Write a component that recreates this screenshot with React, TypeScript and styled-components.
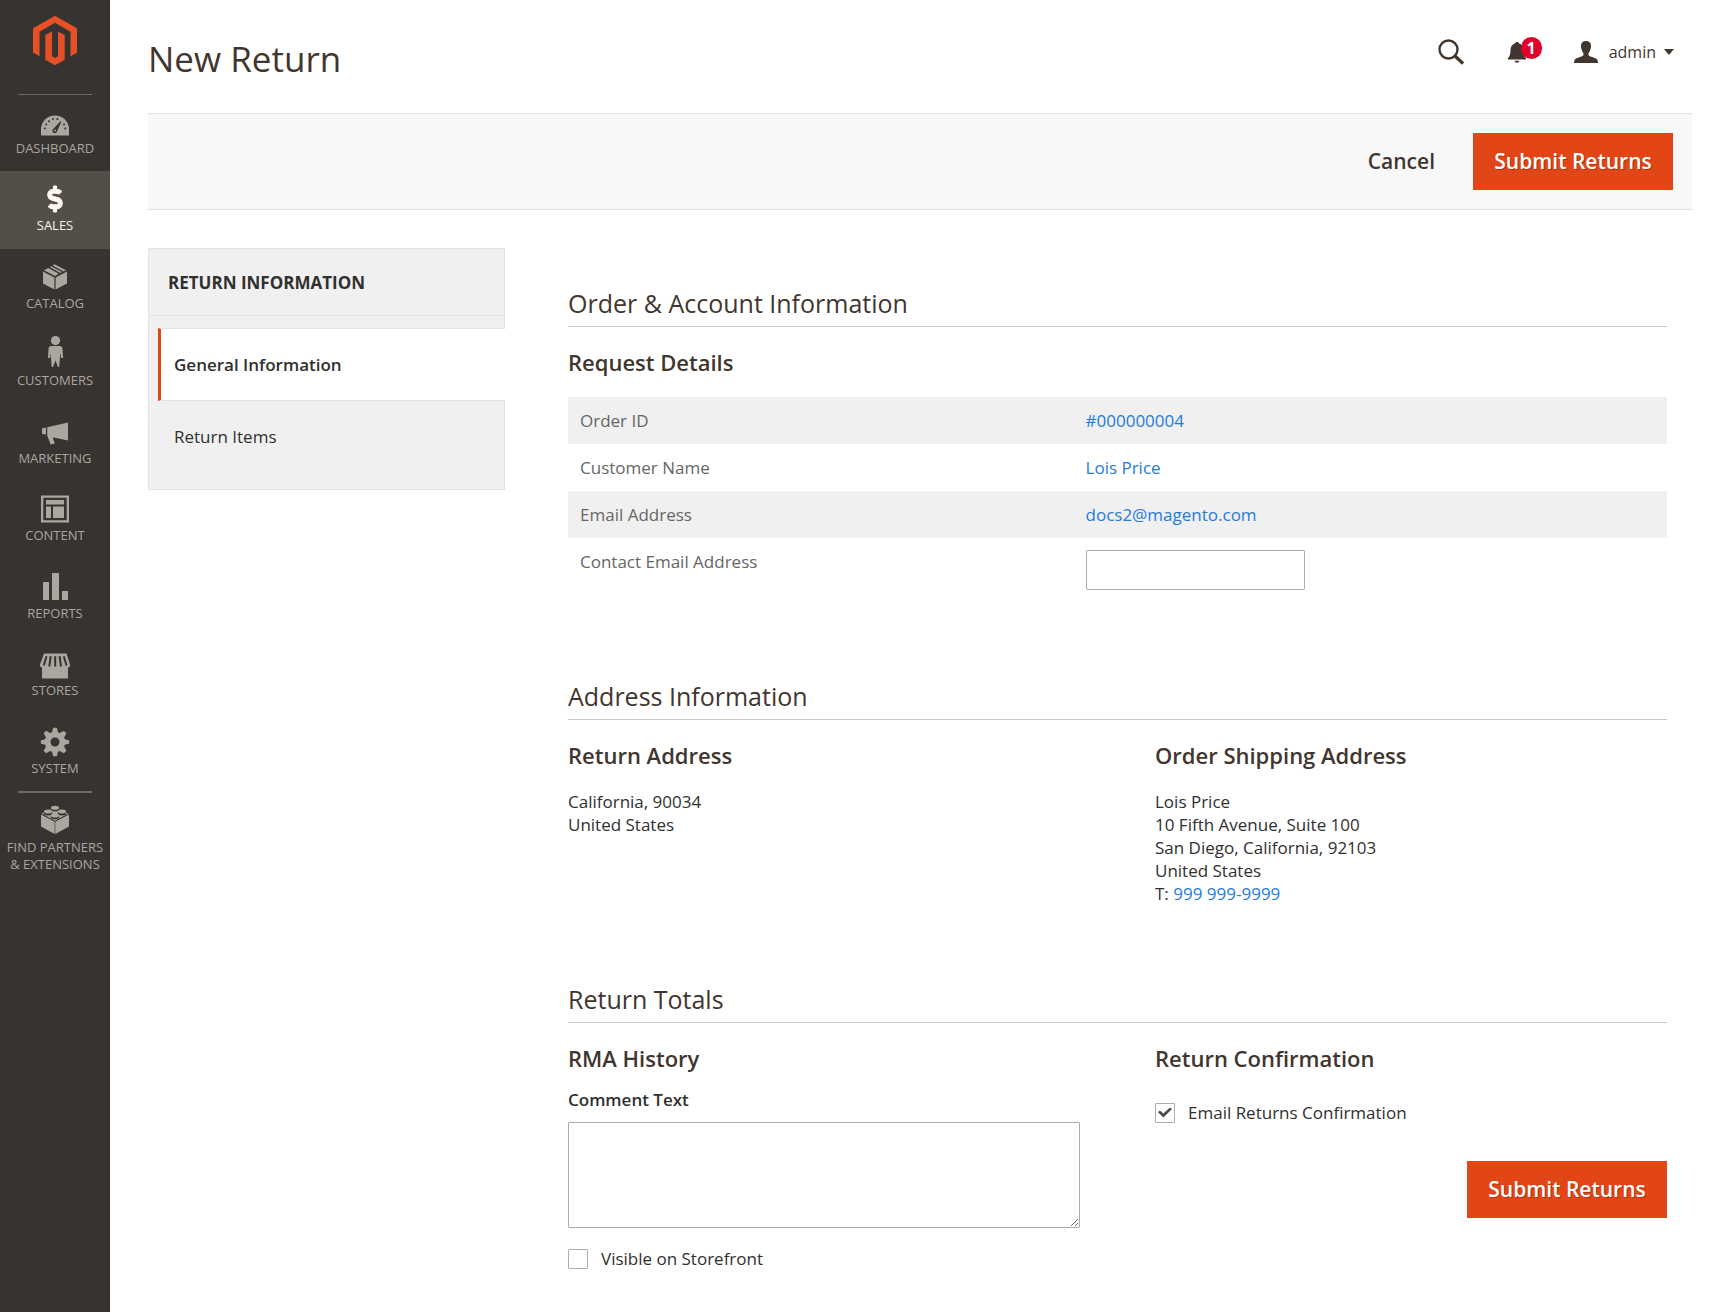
import React from "react";
import styled, { createGlobalStyle } from "styled-components";
import { FaDollarSign } from "react-icons/fa";

const colors = {
  sidebar: "#373330",
  sidebarActive: "#524e48",
  sidebarText: "#aaa6a0",
  sidebarRule: "#736963",
  brand: "#e24516",
  logo: "#e55027",
  heading: "#41362f",
  text: "#303030",
  muted: "#666666",
  link: "#1f7bdd",
  panel: "#f0f0f0",
  panelBorder: "#e3e3e3",
  rule: "#cacaca",
  field: "#adadad",
};

const GlobalStyle = createGlobalStyle`
  *, *::before, *::after { box-sizing: border-box; }
  body {
    margin: 0;
    background: #ffffff;
    color: ${colors.text};
    font-family: "Open Sans", "Noto Sans", sans-serif;
    font-size: 17px;
    line-height: 23px;
  }
  h1, h2, h3, p { margin: 0; }
  button, input, textarea { font-family: inherit; }
`;

const Page = styled.div`
  display: flex;
  min-height: 100vh;
`;

/* ---------- Sidebar ---------- */

const Sidebar = styled.aside`
  flex: 0 0 110px;
  background: ${colors.sidebar};
`;

const LogoLink = styled.a`
  display: flex;
  justify-content: center;
  height: 95px;
  margin: 0 18px -1px;
  padding-top: 15px;
  border-bottom: 1px solid ${colors.sidebarRule};
`;

const MenuList = styled.ul`
  display: grid;
  grid-template-rows: repeat(9, 1fr);
  height: 697px;
  margin: 0;
  padding: 0;
  list-style: none;
`;

const MenuLink = styled.a<{ $active?: boolean }>`
  display: flex;
  flex-direction: column;
  align-items: center;
  gap: 2px;
  height: 100%;
  padding-top: 12px;
  background: ${(p) => (p.$active ? colors.sidebarActive : "transparent")};
  color: ${(p) => (p.$active ? "#f7f3eb" : colors.sidebarText)};
  font-size: 13px;
  line-height: 17px;
  text-align: center;
  text-decoration: none;
  text-transform: uppercase;
`;

const MenuIcon = styled.svg`
  width: 32px;
  height: 32px;
  flex: none;
  overflow: visible;
  fill: currentColor;
`;

const Partners = styled.div`
  margin: 0 18px;
  border-top: 2px solid ${colors.sidebarRule};
`;

/* ---------- Header ---------- */

const Main = styled.main`
  flex: 1;
  min-width: 0;
  padding: 0 36px 40px 38px;
`;

const Header = styled.header`
  display: flex;
  justify-content: space-between;
  height: 113px;
  padding-right: 18px;
`;

const PageTitle = styled.h1`
  padding-top: 36px;
  color: ${colors.heading};
  font-size: 35px;
  font-weight: 400;
  line-height: 46px;
`;

const HeaderActions = styled.div`
  display: flex;
  align-items: flex-start;
  padding-top: 37px;
`;

const IconButton = styled.button`
  position: relative;
  display: flex;
  align-items: center;
  height: 30px;
  margin: 0 44px 0 0;
  padding: 0;
  border: 0;
  background: none;
  color: ${colors.heading};
  cursor: pointer;
`;

const BellButton = styled(IconButton)`
  margin-right: 48px;
`;

const Badge = styled.span`
  position: absolute;
  top: 0;
  left: 13px;
  width: 21px;
  height: 22px;
  border-radius: 11px;
  background: #e0002b;
  color: #ffffff;
  font-size: 16px;
  font-weight: 700;
  line-height: 22px;
  text-align: center;
`;

const AccountButton = styled(IconButton)`
  margin: 0;
  font-size: 16px;
  line-height: 22px;
`;

const AccountName = styled.span`
  margin: 0 8px 0 11px;
`;

const Toolbar = styled.div`
  display: flex;
  justify-content: flex-end;
  padding: 19px;
  border-top: 1px solid ${colors.panelBorder};
  border-bottom: 1px solid ${colors.panelBorder};
  background: #f8f8f8;
`;

const Button = styled.button`
  height: 57px;
  padding: 0 21px;
  border: 0;
  background: none;
  color: ${colors.heading};
  font-size: 21px;
  font-weight: 600;
  line-height: 27px;
  cursor: pointer;
`;

const CancelButton = styled(Button)`
  margin-right: 17px;
`;

const PrimaryButton = styled(Button)`
  min-width: 200px;
  background: ${colors.brand};
  color: #ffffff;
  text-shadow: 1px 1px 0 rgba(0, 0, 0, 0.25);
`;

/* ---------- Columns ---------- */

const Columns = styled.div`
  display: flex;
  align-items: flex-start;
  gap: 63px;
  padding-top: 38px;
`;

const TabsPanel = styled.nav`
  flex: 0 0 357px;
  border: 1px solid ${colors.panelBorder};
  background: ${colors.panel};
`;

const TabsTitle = styled.h2`
  padding: 22px 19px 21px;
  border-bottom: 1px solid ${colors.panelBorder};
  font-size: 17px;
  font-weight: 700;
  line-height: 23px;
  text-transform: uppercase;
`;

const TabsList = styled.ul`
  margin: 0;
  padding: 12px 0 16px 9px;
  list-style: none;

  li + li {
    margin-top: -1px;
  }
`;

const TabLink = styled.a<{ $active?: boolean }>`
  display: block;
  margin-right: -1px;
  padding: 24px 13px;
  border: solid ${(p) => (p.$active ? colors.panelBorder : "transparent")};
  border-width: 1px 0;
  border-left: 3px solid ${(p) => (p.$active ? colors.brand : "transparent")};
  background: ${(p) => (p.$active ? "#ffffff" : "transparent")};
  color: ${colors.text};
  font-weight: ${(p) => (p.$active ? 600 : 400)};
  text-decoration: none;
`;

const Content = styled.form`
  display: flex;
  flex: 1;
  flex-direction: column;
  gap: 79px;
  min-width: 0;
  padding: 40px 25px 0 0;
`;

const SectionTitle = styled.h2`
  margin-bottom: 20px;
  padding-bottom: 8px;
  border-bottom: 1px solid ${colors.rule};
  color: ${colors.heading};
  font-size: 25px;
  font-weight: 400;
  line-height: 30px;
`;

const ItemTitle = styled.h3`
  margin-bottom: 20px;
  color: ${colors.heading};
  font-size: 22px;
  font-weight: 600;
  line-height: 30px;
`;

const FieldTitle = styled(ItemTitle)`
  margin-bottom: 15px;
`;

const DetailsTable = styled.table`
  width: 100%;
  border-collapse: collapse;
  table-layout: fixed;
`;

const DetailsRow = styled.tr`
  &:nth-child(odd) {
    background: ${colors.panel};
  }
`;

const DetailsLabel = styled.th`
  width: 46%;
  padding: 12px;
  color: ${colors.muted};
  font-weight: 400;
  text-align: left;
  vertical-align: top;
`;

const DetailsValue = styled.td`
  padding: 12px;
  vertical-align: top;
`;

const Link = styled.a`
  color: ${colors.link};
  text-decoration: none;
`;

const TextInput = styled.input`
  display: block;
  width: 219px;
  height: 40px;
  padding: 0 12px;
  border: 1px solid ${colors.field};
  border-radius: 1px;
  font-size: 17px;
`;

const TwoColumns = styled.div`
  display: grid;
  grid-template-columns: 1fr 1fr;
  column-gap: 75px;
`;

const Address = styled.address`
  font-style: normal;
`;

const FieldLabel = styled.label`
  display: block;
  margin-bottom: 11px;
  font-weight: 600;
`;

const CommentBox = styled.textarea`
  display: block;
  width: 100%;
  height: 106px;
  padding: 10px 12px;
  border: 1px solid ${colors.field};
  border-radius: 1px;
  font-size: 17px;
  resize: both;
`;

const CheckRow = styled.div`
  display: flex;
  align-items: center;
  gap: 13px;
  padding: 19px 0 0;
`;

const ConfirmRow = styled(CheckRow)`
  padding: 13px 0 37px;
`;

const Checkbox = styled.input`
  display: grid;
  place-items: center;
  width: 20px;
  height: 20px;
  margin: 0;
  border: 1px solid ${colors.field};
  border-radius: 1px;
  background: #ffffff;
  appearance: none;

  &:checked::after {
    content: "";
    width: 14px;
    height: 10px;
    background: #514943;
    clip-path: polygon(0 48%, 14% 30%, 38% 60%, 86% 0, 100% 16%, 39% 100%);
  }
`;

const SubmitRow = styled.div`
  display: flex;
  justify-content: flex-end;
`;

/* ---------- Icons ---------- */

const icons = {
  dashboard: (
    <MenuIcon viewBox="0 0 32 32" aria-hidden="true">
      <path d="M2 29.500V23.500a14 14 0 0 1 28 0v6z" />
      <g fill={colors.sidebar}>
        <circle cx="5.800" cy="22.500" r="1" />
        <circle cx="7.200" cy="18.500" r="1" />
        <circle cx="10" cy="15.200" r="1" />
        <circle cx="14" cy="13" r="1" />
        <circle cx="18.300" cy="13" r="1" />
        <circle cx="25" cy="18.500" r="1" />
        <circle cx="26.200" cy="22.500" r="1" />
        <path d="M21.500 15.200l.8.500-4.300 9.800a2.400 2.400 0 1 1-3.800-2.600z" />
      </g>
      <circle cx="16" cy="24.600" r="1" />
    </MenuIcon>
  ),
  catalog: (
    <MenuIcon viewBox="0 0 32 32" aria-hidden="true">
      <path d="M4 10.500l11.400 6v12L4 22.500zM28 10.500l-11.400 6v12L28 22.500z" />
      <path d="M5 9.200l4.200-2.300 10.600 5.900-3.800 2.300zM10.800 6l1.400-.8L23 11.100l-1.600 1zM13.600 4.400l2-1.200L27 9.200l-2.400 1.300z" />
    </MenuIcon>
  ),
  customers: (
    <MenuIcon viewBox="0 0 32 32" aria-hidden="true">
      <circle cx="16.500" cy="2.600" r="4.600" />
      <path d="M12.500 8h8a3 3 0 0 1 3 3l.6 9h-2l-.8-5-1.100 14h-1.300l-2.400-6.500L14 29h-1.300L11.600 15l-.6 5H9l.5-9a3 3 0 0 1 3-3z" />
    </MenuIcon>
  ),
  marketing: (
    <MenuIcon viewBox="0 0 32 32" aria-hidden="true">
      <path d="M3 12.500l4-1v7l-4-.5zM8.200 11.300L29 6.500v18l-14.500-3.100-.8-.2L15.800 27.600l-4.100.9-3.500-8.800z" />
    </MenuIcon>
  ),
  content: (
    <MenuIcon viewBox="0 0 32 32" aria-hidden="true">
      <path d="M2 2.500h28v27H2zm2.300 2.300v22.400h23.400V4.800z" fillRule="evenodd" />
      <path d="M7 7h18v4.500H7zM7 13.500h5V25H7zM14 13.500h11V25H14z" />
    </MenuIcon>
  ),
  reports: (
    <MenuIcon viewBox="0 0 32 32" aria-hidden="true">
      <path d="M4 11h6v18H4zM13 2h7v27h-7zM23 20h6v9h-6z" />
    </MenuIcon>
  ),
  stores: (
    <MenuIcon viewBox="0 0 32 32" aria-hidden="true">
      <path d="M5 5.500h22.500L31 16.500v2l-2 1v11H3v-11l-2-1v-2z" />
      <path
        d="M7.500 8.200L4.800 17.500M11.700 8.200L10.300 18.500M16.200 8.200V18.500M20.600 8.200L22 18.500M24.800 8.200L27.500 17.500"
        stroke={colors.sidebar}
        strokeWidth="2"
      />
    </MenuIcon>
  ),
  system: (
    <MenuIcon viewBox="0 0 32 32" aria-hidden="true">
      <path
        fillRule="evenodd"
        d="M14.200 1.800h3.600l1.200 4.500 1.800.8 4.100-2.300 2.500 2.500-2.300 4.100.8 1.800 4.300 1.300v3l-4.300 1.300-.8 1.800 2.300 4.100-2.500 2.500-4.100-2.300-1.800.8-1.200 4.500h-3.600L13 25.700l-1.800-.8-4.100 2.300-2.500-2.500 2.300-4.100-.8-1.800L1.800 17.500v-3l4.300-1.300.8-1.800-2.300-4.100 2.500-2.500 4.100 2.300 1.800-.8zM16 11.500a4.500 4.500 0 1 0 0 9 4.500 4.500 0 1 0 0-9z"
      />
    </MenuIcon>
  ),
  partners: (
    <MenuIcon viewBox="0 0 32 32" aria-hidden="true">
      <path d="M2 9.500l13.700 7.300v12.200L2 21.500zM30 9.500l-13.700 7.300v12.200L30 21.500z" />
      <path d="M2.600 8.600L16 2.500l13.400 6.100L16 15.800z" />
      <g fill={colors.sidebar}>
        <ellipse cx="16" cy="4" rx="4.300" ry="2.500" />
        <ellipse cx="9" cy="7.900" rx="4.300" ry="2.500" />
        <ellipse cx="23" cy="7.900" rx="4.300" ry="2.500" />
        <ellipse cx="16" cy="11.800" rx="4.300" ry="2.500" />
      </g>
      <ellipse cx="16" cy="2.700" rx="4" ry="2" />
      <ellipse cx="9" cy="6.600" rx="4" ry="2" />
      <ellipse cx="23" cy="6.600" rx="4" ry="2" />
      <ellipse cx="16" cy="10.500" rx="4" ry="2" />
    </MenuIcon>
  ),
};

const DollarBox = styled.span`
  display: flex;
  align-items: center;
  justify-content: center;
  width: 32px;
  height: 32px;
  color: #fff7f0;
  font-size: 26px;

  svg {
    overflow: visible;
    stroke-width: 20px;
  }
`;

const menu = [
  { label: "Dashboard", icon: icons.dashboard },
  {
    label: "Sales",
    active: true,
    icon: (
      <DollarBox>
        <FaDollarSign aria-hidden="true" />
      </DollarBox>
    ),
  },
  { label: "Catalog", icon: icons.catalog },
  { label: "Customers", icon: icons.customers },
  { label: "Marketing", icon: icons.marketing },
  { label: "Content", icon: icons.content },
  { label: "Reports", icon: icons.reports },
  { label: "Stores", icon: icons.stores },
  { label: "System", icon: icons.system },
];

const details = [
  { label: "Order ID", value: "#000000004" },
  { label: "Customer Name", value: "Lois Price" },
  { label: "Email Address", value: "docs2@magento.com" },
];

function SideMenu() {
  return (
    <Sidebar>
      <LogoLink href="#" aria-label="Magento">
        <svg width="44" height="51" viewBox="0 0 44 51" fill={colors.logo} aria-hidden="true">
          <path d="M22 .7L44 13.300v24.500L37.500 41.300V16.700L22 7.800 6.500 16.700V41.300L0 37.500V13.300z" />
          <path d="M19 16.500v24.800l3 1.700 3-1.700V16.500l6.700 3.500v24.700L22 50.300l-9.700-5.600V20z" />
        </svg>
      </LogoLink>
      <nav>
        <MenuList>
          {menu.map((item) => (
            <li key={item.label}>
              <MenuLink href="#" $active={item.active}>
                {item.icon}
                {item.label}
              </MenuLink>
            </li>
          ))}
        </MenuList>
        <Partners />
        <MenuLink href="#">
          {icons.partners}
          <span>
            Find Partners
            <br />
            &amp; Extensions
          </span>
        </MenuLink>
      </nav>
    </Sidebar>
  );
}

function PageHeader() {
  return (
    <Header>
      <PageTitle>New Return</PageTitle>
      <HeaderActions>
        <IconButton type="button" aria-label="Search">
          <svg width="26" height="26" viewBox="0 0 26 26" fill="none" stroke="currentColor" aria-hidden="true">
            <circle cx="10.500" cy="10.500" r="9" strokeWidth="2.400" />
            <path d="M17 17l8 7.500" strokeWidth="3.200" />
          </svg>
        </IconButton>
        <BellButton type="button" aria-label="Notifications">
          <svg width="18" height="22" viewBox="0 0 18 22" fill="currentColor" aria-hidden="true">
            <path d="M9 1c1 0 1.600.5 1.800 1.200C14 3 15.300 5.500 15.500 9c.2 4.500.8 6.500 2.500 8v1.500H0V17c1.700-1.500 2.300-3.500 2.500-8C2.700 5.500 4 3 7.200 2.200 7.400 1.500 8 1 9 1zM6.500 19.800h5c-.4 1.300-1.300 2-2.500 2s-2.100-.7-2.500-2z" />
          </svg>
          <Badge>1</Badge>
        </BellButton>
        <AccountButton type="button">
          <svg width="24" height="22" viewBox="0 0 24 22" fill="currentColor" aria-hidden="true">
            <path d="M12 0c3.200 0 5 1.800 5 4.600 0 1.600-.1 2.400-.5 3.400-.5 2-1.200 3.300-2 4.200v1.900c.6 1.200 2.600 1.800 5.500 2.700 3 1 4 2.100 4 5.200H0c0-3.100 1-4.200 4-5.200 2.900-.9 4.900-1.500 5.500-2.700v-1.900c-.8-.9-1.500-2.200-2-4.200C7.100 7 7 6.200 7 4.600 7 1.800 8.800 0 12 0z" />
          </svg>
          <AccountName>admin</AccountName>
          <svg width="10" height="6" viewBox="0 0 10 6" fill="currentColor" aria-hidden="true">
            <path d="M0 0h10L5 6z" />
          </svg>
        </AccountButton>
      </HeaderActions>
    </Header>
  );
}

export default function App() {
  return (
    <>
      <GlobalStyle />
      <Page>
        <SideMenu />
        <Main>
          <PageHeader />
          <Toolbar>
            <CancelButton type="button">Cancel</CancelButton>
            <PrimaryButton type="submit" form="return-form">
              Submit Returns
            </PrimaryButton>
          </Toolbar>
          <Columns>
            <TabsPanel aria-label="Return information">
              <TabsTitle>Return Information</TabsTitle>
              <TabsList>
                <li>
                  <TabLink href="#" $active>
                    General Information
                  </TabLink>
                </li>
                <li>
                  <TabLink href="#">Return Items</TabLink>
                </li>
              </TabsList>
            </TabsPanel>
            <Content id="return-form" onSubmit={(e) => e.preventDefault()}>
              <section>
                <SectionTitle>Order &amp; Account Information</SectionTitle>
                <ItemTitle>Request Details</ItemTitle>
                <DetailsTable>
                  <tbody>
                    {details.map((row) => (
                      <DetailsRow key={row.label}>
                        <DetailsLabel scope="row">{row.label}</DetailsLabel>
                        <DetailsValue>
                          <Link href="#">{row.value}</Link>
                        </DetailsValue>
                      </DetailsRow>
                    ))}
                    <DetailsRow>
                      <DetailsLabel scope="row">
                        <label htmlFor="contact-email">Contact Email Address</label>
                      </DetailsLabel>
                      <DetailsValue>
                        <TextInput id="contact-email" type="email" />
                      </DetailsValue>
                    </DetailsRow>
                  </tbody>
                </DetailsTable>
              </section>
              <section>
                <SectionTitle>Address Information</SectionTitle>
                <TwoColumns>
                  <div>
                    <ItemTitle>Return Address</ItemTitle>
                    <Address>
                      California, 90034
                      <br />
                      United States
                    </Address>
                  </div>
                  <div>
                    <ItemTitle>Order Shipping Address</ItemTitle>
                    <Address>
                      Lois Price
                      <br />
                      10 Fifth Avenue, Suite 100
                      <br />
                      San Diego, California, 92103
                      <br />
                      United States
                      <br />
                      T: <Link href="tel:9999999999">999 999-9999</Link>
                    </Address>
                  </div>
                </TwoColumns>
              </section>
              <section>
                <SectionTitle>Return Totals</SectionTitle>
                <TwoColumns>
                  <div>
                    <FieldTitle>RMA History</FieldTitle>
                    <FieldLabel htmlFor="comment">Comment Text</FieldLabel>
                    <CommentBox id="comment" />
                    <CheckRow>
                      <Checkbox id="visible" type="checkbox" />
                      <label htmlFor="visible">Visible on Storefront</label>
                    </CheckRow>
                  </div>
                  <div>
                    <FieldTitle>Return Confirmation</FieldTitle>
                    <ConfirmRow>
                      <Checkbox id="confirm" type="checkbox" defaultChecked />
                      <label htmlFor="confirm">Email Returns Confirmation</label>
                    </ConfirmRow>
                    <SubmitRow>
                      <PrimaryButton type="submit">Submit Returns</PrimaryButton>
                    </SubmitRow>
                  </div>
                </TwoColumns>
              </section>
            </Content>
          </Columns>
        </Main>
      </Page>
    </>
  );
}
